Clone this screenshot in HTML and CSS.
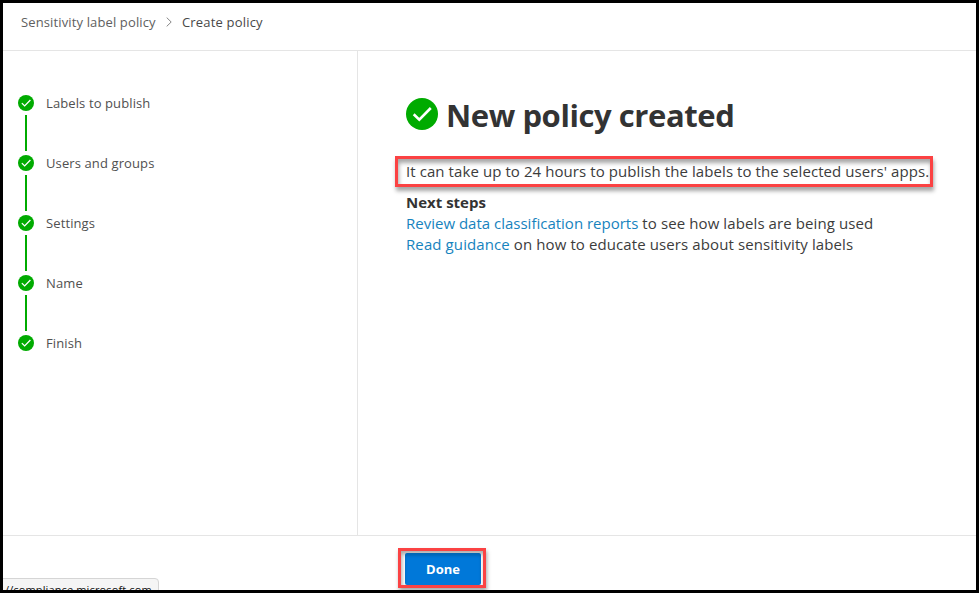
FILE: index.html
```html
<!DOCTYPE html>
<html lang="en">
<head>
<meta charset="utf-8">
<title>Create policy</title>
<link rel="stylesheet" href="styles.css">
</head>
<body>
<svg class="defs" width="0" height="0" aria-hidden="true">
  <symbol id="check" viewBox="0 0 32 32">
    <circle cx="16" cy="16" r="16" fill="#00ab00"/>
    <path d="M7.7 16.2l5.6 5.5L24.8 10" fill="none" stroke="#fff" stroke-width="2.6"/>
  </symbol>
</svg>
<div class="window">
  <header class="breadcrumb">
    <span class="crumb">Sensitivity label policy</span>
    <svg class="chevron" viewBox="0 0 6 10"><path d="M.7.6L5.2 5 .7 9.4" fill="none" stroke="#777" stroke-width=".9"/></svg>
    <span class="crumb current">Create policy</span>
  </header>
  <div class="body">
    <nav class="steps">
      <div class="step"><svg class="dot"><use href="#check"/></svg><span>Labels to publish</span></div>
      <div class="step"><svg class="dot"><use href="#check"/></svg><span>Users and groups</span></div>
      <div class="step"><svg class="dot"><use href="#check"/></svg><span>Settings</span></div>
      <div class="step"><svg class="dot"><use href="#check"/></svg><span>Name</span></div>
      <div class="step"><svg class="dot"><use href="#check"/></svg><span>Finish</span></div>
    </nav>
    <main class="content">
      <div class="title"><svg class="badge"><use href="#check"/></svg><h1>New policy created</h1></div>
      <div class="notice"><p>It can take up to 24 hours to publish the labels to the selected users' apps.</p></div>
      <h2>Next steps</h2>
      <p class="line"><a class="reports">Review data classification reports</a> to see how labels are being used</p>
      <p class="line"><a>Read guidance</a> on how to educate users about sensitivity labels</p>
    </main>
  </div>
  <footer class="footer">
    <div class="callout"><button class="done">Done</button></div>
  </footer>
  <div class="status">//compliance.microsoft.com</div>
</div>
</body>
</html>
```

FILE: styles.css
```css
* { box-sizing: border-box; margin: 0; padding: 0; }
body {
  width: 979px;
  height: 593px;
  overflow: hidden;
  font-family: "Open Sans", "Noto Sans", sans-serif;
  color: #3c3c3c;
  background: #fff;
}
.defs { position: absolute; }
.window {
  position: relative;
  display: flex;
  flex-direction: column;
  width: 979px;
  height: 593px;
  border: 3px solid #000;
  overflow: hidden;
}
.breadcrumb {
  display: flex;
  align-items: center;
  height: 48px;
  padding: 0 18px 10px;
  border-bottom: 1px solid #e5e5e5;
  font-size: 13px;
}
.crumb { width: 136px; white-space: nowrap; color: #606060; letter-spacing: 0.13px; }
.crumb.current { width: auto; color: #484848; letter-spacing: 0.18px; }
.chevron { width: 6px; height: 10px; margin: 0 10px 0 9px; }
.body { display: flex; height: 484px; }
.steps { width: 355px; padding: 42px 15px; border-right: 1px solid #e5e5e5; }
.step {
  position: relative;
  display: flex;
  align-items: center;
  height: 20px;
  margin-bottom: 40px;
  gap: 12px;
  font-size: 13px;
  letter-spacing: 0.11px;
  color: #505050;
}
.step:not(:last-child)::after {
  content: "";
  position: absolute;
  left: 7px;
  top: 22px;
  width: 2px;
  height: 36px;
  background: #00ab00;
}
.dot { width: 16px; height: 16px; }
.content { flex: 1; padding: 45px 0 0 37px; }
.title { display: flex; align-items: center; height: 37px; padding-left: 11px; }
.badge { width: 32px; height: 32px; margin: 0 8px 1px 0; }
h1 { font-size: 31px; line-height: 40px; font-weight: 700; letter-spacing: -0.42px; white-space: nowrap; color: #333; }
.notice {
  width: 538px;
  height: 31px;
  margin-top: 23px;
  padding: 0 0 0 8px;
  border: 3px solid #fb4243;
  box-shadow: 1px 4px 4px rgba(0,0,0,.35), inset 1px 4px 4px rgba(0,0,0,.35);
}
.notice p { font-size: 15px; line-height: 25px; letter-spacing: 0.08px; white-space: nowrap; }
h2 { margin: 5px 0 0 11px; font-size: 15px; line-height: 21px; font-weight: 700; color: #333; }
.line { margin-left: 11px; font-size: 15px; line-height: 21px; letter-spacing: 0.1px; white-space: nowrap; }
a { color: #1683be; }
.reports { letter-spacing: 0; }
.footer { flex: 1; border-top: 1px solid #e5e5e5; padding: 12px 0 0 395px; }
.callout {
  width: 88px;
  height: 40px;
  padding: 2px 2px 3px 4px;
  border: 3px solid #fb4243;
  box-shadow: 1px 3px 4px rgba(0,0,0,.35), inset 1px 3px 4px rgba(0,0,0,.35);
}
.done {
  display: block;
  width: 76px;
  height: 32px;
  border: 0;
  border-radius: 2px;
  background: #0078d9;
  box-shadow: inset 0 3px 3px rgba(0,0,0,.16);
  color: #fff;
  font: 700 13px/32px "Open Sans", sans-serif;
}
.status {
  position: absolute;
  left: -1px;
  top: 575px;
  width: 157px;
  height: 22px;
  padding-left: 2px;
  border: 1px solid #d5d5d5;
  border-radius: 0 4px 0 0;
  background: #f5f5f5;
  color: #111;
  font-size: 11px;
  letter-spacing: 0.13px;
  line-height: 21px;
  white-space: nowrap;
}
```
